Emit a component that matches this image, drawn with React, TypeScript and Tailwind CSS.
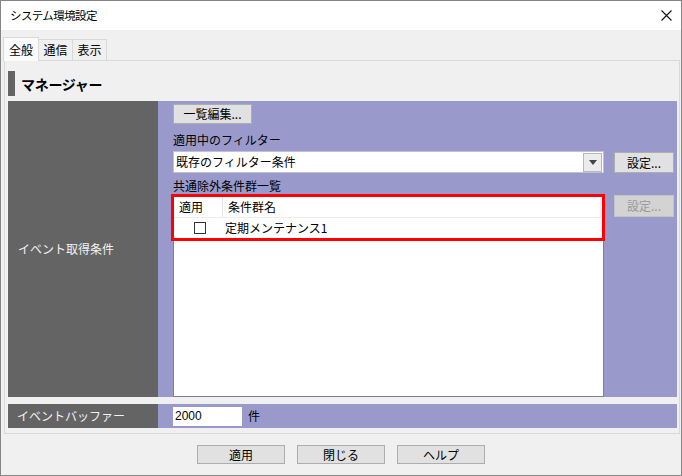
import React from "react";

const Button = ({ label, className = "", disabled = false }: { label: string; className?: string; disabled?: boolean }) => (
    <div
        className={
            "flex items-center justify-center border text-[12px] leading-none " +
            (disabled
                ? "bg-[#d3d3d3] border-[#c4c4c4] text-[#9a9a9a] "
                : "bg-[#e1e1e1] border-[#adadad] text-black ") +
            className
        }
    >
        {label}
    </div>
);

const App = () => {
    return (
        <div className="w-[682px] h-[476px] bg-[#f0f0f0] border border-[#858585] flex flex-col overflow-hidden text-black text-[12px] font-['Noto_Sans_CJK_JP',sans-serif]">
            {/* Title bar */}
            <div className="h-[29px] shrink-0 bg-white flex items-center justify-between pl-[9px] pr-[9px]">
                <span className="text-[11.5px] leading-none tracking-[-0.6px]">システム環境設定</span>
                <svg width="11" height="11" viewBox="0 0 11 11" fill="none" stroke="#111" strokeWidth="1.1">
                    <path d="M0.5 0.5 L10.5 10.5 M10.5 0.5 L0.5 10.5" />
                </svg>
            </div>

            {/* Body */}
            <div className="flex-1 flex flex-col pl-[2px]">
                {/* Tabs */}
                <div className="mt-[7px] h-[23px] flex items-end">
                    <div className="relative z-10 -mb-px h-[24px] w-[36px] bg-[#fbfbfb] border border-b-0 border-[#d9d9d9] flex items-center justify-center leading-none">
                        全般
                    </div>
                    <div className="h-[21px] w-[34px] bg-[#f0f0f0] border border-l-0 border-b-0 border-[#d9d9d9] flex items-center justify-center leading-none">
                        通信
                    </div>
                    <div className="h-[21px] w-[34px] bg-[#f0f0f0] border border-l-0 border-b-0 border-[#d9d9d9] flex items-center justify-center leading-none">
                        表示
                    </div>
                </div>

                {/* Tab panel */}
                <div className="ml-[1px] w-[676px] h-[374px] border border-[#d9d9d9] bg-[#f0f0f0] pl-[3px] pt-[10px]">
                    {/* Section header */}
                    <div className="flex items-center h-[25px] gap-[6px]">
                        <div className="w-[7px] h-[25px] bg-[#646464]" />
                        <span className="text-[14px] font-bold leading-none tracking-[-0.3px]">マネージャー</span>
                    </div>

                    {/* Settings table */}
                    <div className="mt-[5px] w-[669px] flex flex-col gap-[7px]">
                        <div className="flex h-[296px]">
                            <div className="w-[150px] bg-[#646464] text-[#f2f2f2] flex items-center pl-[10px] leading-none">
                                イベント取得条件
                            </div>
                            <div className="flex-1 bg-[#9999cc] pl-[15px] flex flex-col">
                                <Button label="一覧編集..." className="mt-[3px] w-[79px] h-[20px]" />
                                <div className="h-[27px] flex items-end pb-[3px] leading-[16px]">適用中のフィルター</div>
                                <div className="flex items-start gap-[10px]">
                                    <div className="w-[431px] h-[22px] bg-white border border-[#c0c0d8] flex items-center justify-between pl-[2px] pr-[1px]">
                                        <span className="leading-none">既存のフィルター条件</span>
                                        <div className="w-[19px] h-[19px] bg-[#ececec] border border-[#b8b8b8] flex items-center justify-center">
                                            <svg width="8" height="5" viewBox="0 0 8 5">
                                                <path d="M0 0 H8 L4 5 Z" fill="#444" />
                                            </svg>
                                        </div>
                                    </div>
                                    <Button label="設定..." className="mt-px w-[60px] h-[21px]" />
                                </div>
                                <div className="h-[23px] flex items-end pb-[2px] leading-[16px]">共通除外条件群一覧</div>
                                <div className="flex-1 flex items-start gap-[10px]">
                                    <div className="relative w-[431px] h-full bg-white border border-[#7f7f99]">
                                        <div className="flex h-[21px] border-b border-[#ececec] mr-[2px] border-r">
                                            <div className="w-[49px] border-r border-[#e3e3e3] flex items-center pl-[5px] leading-none">適用</div>
                                            <div className="flex-1 flex items-center pl-[5px] leading-none">条件群名</div>
                                        </div>
                                        <div className="flex h-[20px] items-center">
                                            <div className="w-[49px] flex justify-center pl-[3px]">
                                                <div className="w-[12px] h-[12px] border border-[#333] bg-white" />
                                            </div>
                                            <span className="pl-[2px] leading-none">定期メンテナンス1</span>
                                        </div>
                                        {/* highlight annotation */}
                                        <div className="absolute left-[-3px] top-[-3px] w-[434px] h-[47px] border-[3px] border-[#ff0000]" />
                                    </div>
                                    <Button label="設定..." disabled className="-mt-px w-[60px] h-[22px]" />
                                </div>
                            </div>
                        </div>

                        <div className="flex h-[24px]">
                            <div className="w-[150px] bg-[#646464] text-[#f2f2f2] flex items-center pl-[9px] leading-none">
                                イベントバッファー
                            </div>
                            <div className="flex-1 bg-[#9999cc] pl-[15px] flex items-center gap-[6px]">
                                <div className="w-[69px] h-[19px] bg-white flex items-center pl-[2px] font-['Liberation_Sans',sans-serif] text-[12px] leading-none">
                                    2000
                                </div>
                                <span className="leading-none">件</span>
                            </div>
                        </div>
                    </div>
                </div>

                {/* Bottom buttons */}
                <div className="mt-[11px] flex justify-center gap-[12px] pr-[2px]">
                    <Button label="適用" className="w-[88px] h-[19px]" />
                    <Button label="閉じる" className="w-[88px] h-[19px]" />
                    <Button label="ヘルプ" className="w-[88px] h-[19px]" />
                </div>
            </div>
        </div>
    );
};

export default App;
